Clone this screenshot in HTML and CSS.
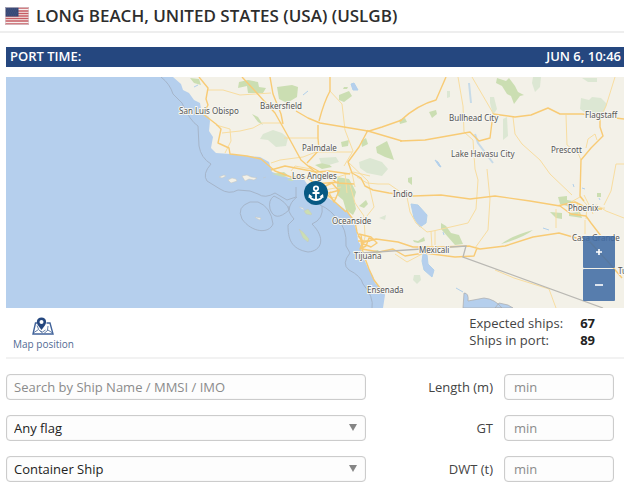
FILE: index.html
```html
<!DOCTYPE html>
<html lang="en">
<head>
<meta charset="utf-8">
<meta name="viewport" content="width=device-width, initial-scale=1">
<title>Long Beach port</title>
<link rel="stylesheet" href="styles.css">
</head>
<body>
<header class="page-head">
  <svg class="flag" viewBox="0 0 24 18" aria-hidden="true">
    <rect width="24" height="18" fill="#f6efee"/>
    <path d="M0 1h24M0 4h24M0 6.500h24M0 9h24M0 11.500h24M0 14h24M0 17h24" stroke="#c65b62" stroke-width="1.300"/>
    <rect width="13.500" height="9.500" fill="#354675"/>
    <path d="M1.500 2h11M2.500 4h10M1.500 6h11M2.500 8h10" stroke="#7582a5" stroke-width=".6" stroke-dasharray=".7 1.300"/>
    <rect x=".5" y=".5" width="23" height="17" fill="none" stroke="#d5cdd1" stroke-opacity=".65"/>
  </svg>
  <h1 class="title">LONG BEACH, UNITED STATES (USA) (USLGB)</h1>
</header>
<main class="content">
  <section class="time-bar"><span>PORT TIME:</span><time>JUN 6, 10:46</time></section>

  <section class="map" aria-label="Port map">
    <svg class="map-art" viewBox="6 77 618 231" preserveAspectRatio="xMidYMid slice">
      <rect x="6" y="77" width="618" height="231" fill="#b5cfed"/>
      <path fill="#f3f1e8" d="M173 77L181 84L183 90L189 93L194 100L200 103L201 109L204 114L209 117L210 121L209 131L213 137L211 148L216 153L230 154L245 156L260 157L269 162L272 172L281 175L289 178L303 178L307 184L314 192L328 198L336 203L343 208L350 215L354 223L357 232L358 241L362 247L363 257L368 268L373 276L375 283L383 290L385 295L383 308H624V77Z"/>
      <g class="woods">
        <path d="M190 78l9 1 2 6-7-2ZM239 82l9-2 10 2 1 5 7 1-3 5-15 0-1-7-9 2ZM277 87l15-2 6 2-1 10-10 6-8-4ZM339 95l10-4 3 5-8 6-5-2ZM252 114l6 3 5 8-5-3ZM359 206l7-6 2 4-4 4ZM376 147l11-6 4 10 3 9-9-3-8-4ZM361 141l5-3 2 6-6 3ZM341 142l8-2-1 6-6 1ZM497 78l9 3 3-3 6 8 3 6 6 3-4 1-6 8-3-8-4-2-5-8-6-3ZM272 174l12-2 5 4-6 1ZM315 165l11-3 6 5-10 2ZM337 177l12 2 4 7 3 6-2 7 2 10-3 6-7-5-3-10-6-5ZM399 120l6-2 2 4-7 2ZM429 112l7-2 1 4-5 4ZM441 223l5 3 5 7 8 2 4 9-8 1-7-8-7-8ZM413 240l5 1 6-4 1 4-7 2-4-1ZM408 178l4-1 0 8-4-3ZM558 197l9-1 0 4 6 1-2 6-11-3ZM569 213l11-1 2 6-6-1-7-1ZM501 244q10-8 32-14-10 8-32 14ZM597 193h4v4h-4ZM550 212l12 1v6l-6-1ZM344 87h4l-1 2h-4ZM287 180l6-3 5 1-6 3ZM373 251l5-1 3 4-7 1Z" fill="#cbdeb2"/>
        <path d="M263 134l10-4 9 3 6 5-2 8-10 1-8-7-8-1ZM359 162l11-4 12 4 6 7-6 7-15-3-7-5ZM319 158l17-1 3 5-10 3-8-2ZM533 77l8 0-1 10-5 5-3-9ZM582 78h15v4h-9ZM581 98l8 2 3-3 9 1 6 6-3 8 4 3-8 3-5-5-7 2-8-6Z M503 119l4-2 1 19-5 4ZM490 97l4 0 3 12-4 6-3-12ZM414 275l6 0 1 5-4 4-4-4ZM379 218l7-3-1 5ZM447 91l3 0 0 6-3 1Z" fill="#dce7d3"/>
      </g>
      <g fill="#b5cfed" stroke="#b1d0eb">
        <path d="M351 84l3-1 4 7-5 0ZM411 204l7 1 9 10-1 8-6 4-6-9ZM423 254l4 1 1 9 6 6-2 7-8-7-2-9Z"/>
        <path d="M435 160l3 2 3 5-2-1ZM303 95l5-4M443 232l1 3M456 288l7 4M194 87l4-2M543 228l6 2M582 188l3 1M573 184l1 3M599 198l1 2"/>
      </g>
      <path d="M469 83l2 20M475 134l3 9 15 20" fill="none" stroke="#c7dbe8" stroke-width="2"/>
      <path d="M463 308l1-15q5 0 4 8l16-3q11 1 18 10ZM495 308l4-5 9 2 5 3Z" fill="#b5cfed" stroke="#aaa" stroke-width=".7"/>
      <g fill="#f3f1e8" stroke="#c4c7c3" stroke-width=".5">
        <path d="M219 177l5-2 2 1-4 2ZM228 180l4-2 4 1 1 2-6 2ZM242 176l5-1 4 2 6 1-3 2-5-1-4 2ZM255 217l6 1-1 2-4-2ZM263 178l3-1M299 207l4 1 1 2"/>
        <path d="M304 211l4-2 4 5-1 1-5-1ZM299 229l4 3 6 7-1 3-5-4Z" fill="#cbdeb2"/>
      </g>
      <g class="boundary">
        <path d="M161 77Q170 84 173 94L182 103Q190 121 198 126L199 146Q201 158 211 164Q202 174 207 181L220 189Q229 195 238 190L250 191L258 194Q265 199 275 193L287 200L296 197V187"/>
        <path d="M250 202Q236 207 242 219C252 233 269 234 273 224Q271 207 258 202ZM274 196Q287 202 289 210Q275 223 270 209Q268 200 274 196ZM289 210Q290 202 297 197M322 206Q324 219 312 224C326 238 322 251 308 252C291 249 288 239 288 225L294 219Q287 211 289 206M320 205Q332 210 338 221Q347 228 346 246L350 253Q341 264 349 270Q361 276 363 284Q374 297 372 308"/>
      </g>
      <g class="roads">
        <path d="M208 90L223 90L240 95L271 93M222 133L240 131L253 128L262 123L282 123M216 125L230 129L231 141L225 153M284 138H318M329 90L342 104L345 130L353 151L344 166M315 152L352 152M458 77L463 106L464 132L473 140L475 169L478 180L476 209L468 223L433 231L427 232L416 223L410 212L407 197M472 77L493 113M513 117L515 134L522 144L540 160L550 174L572 195M566 115L567 145L578 153L581 160M487 169L490 199L488 230L475 248M615 77L606 106L603 112M431 231L432 248M435 231V245M422 254L407 262L395 254"/>
        <path d="M350 185L355 203L364 216L365 237L360 255M357 177L367 183L378 184L389 184L399 191M348 162L368 181L374 207L363 221M324 190L341 187M345 173L347 193M352 173L355 187M309 170L312 184L322 194L331 192L321 196L337 198M315 173L328 175L338 177L353 172L370 176M291 171L295 166L311 169M271 163L280 160L303 157L316 152M567 206L572 211L597 205L606 211L624 218M571 202L580 197L587 205L586 219M577 202L579 215M584 195L590 207L593 214M575 209L605 208M556 209V228M585 220V234M586 148L588 139L595 134L597 140M624 164H616L611 191L604 205M495 270L514 278L549 289L556 308"/>
        <path class="major" d="M199 77L208 88L206 99L208 105L203 114L216 124L221 129L218 143L229 148L230 154L247 156L261 159L275 171L291 177L305 177L315 183L324 191L335 202L346 212M242 77L255 91L275 113L284 129L289 138L301 160L314 171L324 179M270 77L273 94L281 114L283 124M296 111L308 118L320 123L368 131L402 141M318 125V138L319 150L307 163M400 121Q417 105 436 100L446 77M319 121Q324 102 330 91L330 77"/>
        <path class="major" d="M400 141L425 140L470 132L479 141L490 138L493 114L515 117L531 115L548 108L560 114H582L624 119M402 120L382 127L366 132M368 130L359 147L348 162L352 173L361 178L365 186L373 190L389 193L413 196L441 195L470 199L495 196L530 201L560 206M600 118L600 127L603 136L591 148L581 160L580 196L584 201M557 206L575 202L583 206L594 209L602 209"/>
        <path class="major" d="M346 210L355 222L357 232L361 240L363 253L369 269L374 280L383 292M359 234L371 237L377 243L371 247L361 243L376 239L398 242L413 247H440L469 246L480 249L505 246L533 237L559 233L590 242L610 264L622 278M362 249L379 252L393 249L405 256L424 253L455 257L474 256L477 248M560 206L571 214L586 216L591 223L601 236"/>
        <path class="major" d="M309 166L331 178L337 183L354 184M271 170L285 166L316 172L329 171L350 174M315 184L339 182M321 188L332 183L339 191L334 202L329 193L340 190M358 236l5 5-3 8 6-3 3-8 5 2M358 241h12M361 235l2 14"/>
      </g>
      <g class="state-line"><path d="M362 253L466 246L463 257L603 308"/></g>
      <g class="places">
        <text x="179" y="114">San Luis Obispo</text><text x="260" y="109">Bakersfield</text><text x="302" y="151">Palmdale</text><text x="292" y="179">Los Angeles</text><text x="449" y="121">Bullhead City</text><text x="585" y="118">Flagstaff</text><text x="451" y="157">Lake Havasu City</text><text x="551" y="153">Prescott</text><text x="393" y="197">Indio</text><text x="332" y="224">Oceanside</text><text x="354" y="259">Tijuana</text><text x="419" y="253">Mexicali</text><text x="367" y="293">Ensenada</text><text x="568" y="211">Phoenix</text><text x="572" y="241">Casa Grande</text><text x="618" y="274">Tucson</text>
      </g>
      <g transform="translate(316 193)">
        <circle r="12" fill="#075983"/>
        <g fill="none" stroke="#fff" stroke-width="1.800" stroke-linejoin="round"><circle cy="-4.500" r="2.200"/><path d="M0-2.500V7M-3.500 0H3.500M-6.500 2.500Q-5.500 6.800 0 7Q5.500 6.800 6.500 2.500"/></g>
        <path d="M-7.500 5L-7 1L-3.500 3.500ZM7.500 5L7 1L3.500 3.500Z" fill="#fff"/>
      </g>
    </svg>
    <div class="zoom-controls">
      <button class="zoom-button" type="button" aria-label="Zoom in"><svg viewBox="0 0 8 8"><path d="M1 4h6M4 1v6"/></svg></button>
      <button class="zoom-button" type="button" aria-label="Zoom out"><svg viewBox="0 0 8 8"><path d="M0 4h8"/></svg></button>
    </div>
  </section>

  <section class="summary">
    <a class="map-link" href="#map">
      <svg class="map-link-icon" viewBox="0 0 22 18" aria-hidden="true">
        <path d="M5 6H3.500L1 17H21L18 6H14.500" fill="none" stroke="#41639a" stroke-width="1.400"/>
        <path d="M2 15.500l4.500-3 4 3.500M12 16.500l4-3.500 4.500 3M5 8.500l1.500 3.500M16 9l-.5 4M8 14l2.500 1 3-2" fill="none" stroke="#6580aa"/>
        <path d="M9.500 .5C4 .5 4 6 6.500 9L9.500 13L12.500 9C15 6 15 .5 9.500 .5Z" fill="#25477f"/><circle cx="9.500" cy="5" r="2" fill="#fff"/>
      </svg>
      <span>Map position</span>
    </a>
    <dl class="stats"><dt>Expected ships:</dt><dd>67</dd><dt>Ships in port:</dt><dd>89</dd></dl>
  </section>

  <form class="filters">
    <input class="field" type="text" aria-label="Search ships" placeholder="Search by Ship Name / MMSI / IMO">
    <label class="field-label" for="length">Length (m)</label>
    <input class="field" id="length" type="text" placeholder="min">
    <div class="select-wrap"><select class="field" aria-label="Flag"><option>Any flag</option></select></div>
    <label class="field-label" for="gt">GT</label>
    <input class="field" id="gt" type="text" placeholder="min">
    <div class="select-wrap"><select class="field" aria-label="Ship type"><option>Container Ship</option></select></div>
    <label class="field-label" for="dwt">DWT (t)</label>
    <input class="field" id="dwt" type="text" placeholder="min">
  </form>
</main>
</body>
</html>
```
FILE: styles.css
```css
* { box-sizing: border-box; }
body {
  margin: 0;
  background: #fff;
  color: #444;
  font: 13px/18px "Open Sans", "Noto Sans", sans-serif;
}
.page-head {
  display: flex;
  align-items: center;
  gap: 7px;
  height: 33px;
  padding-left: 5px;
  border-bottom: 2px solid #eee;
}
.flag { width: 24px; height: 18px; }
.title {
  margin: 0;
  color: #2d2d2d;
  font-size: 17px;
  font-weight: 600;
  line-height: 24px;
  white-space: nowrap;
}
.content { padding: 14px 0 6px 6px; }
.time-bar {
  display: flex;
  justify-content: space-between;
  height: 20px;
  padding: 0 3px 0 4px;
  background: #25477f;
  color: #fff;
  font-weight: 600;
  line-height: 19px;
}
.map { position: relative; height: 231px; margin-top: 10px; overflow: hidden; }
.map-art { display: block; width: 100%; height: 100%; }
.boundary { fill: none; stroke: #a5b5ca; stroke-width: 1; }
.roads { fill: none; stroke: #f8dda0; stroke-width: 1; stroke-linejoin: round; }
.major { stroke: #f8cb75; stroke-width: 1.4; }
.state-line { fill: none; stroke: #b9b8b3; stroke-width: 1.3; }
.places {
  fill: #555;
  stroke: #f7f6f1;
  stroke-width: 2px;
  stroke-linejoin: round;
  paint-order: stroke;
  font: 8px "Noto Sans", sans-serif;
}
.zoom-controls {
  position: absolute;
  right: 9px;
  bottom: 7px;
  display: grid;
  gap: 1px;
}
.zoom-button {
  display: grid;
  place-items: center;
  width: 32px;
  height: 32px;
  padding: 0;
  border: 0;
  border-radius: 1px;
  background: rgb(65 108 164 / 88%);
}
.zoom-button svg { width: 8px; height: 8px; fill: none; stroke: #fff; stroke-width: 1.6; }
.summary {
  display: flex;
  justify-content: space-between;
  height: 51px;
  padding: 7px 29px 0 7px;
  border-bottom: 2px solid #f2f2f2;
}
.map-link {
  display: flex;
  flex-direction: column;
  align-items: center;
  padding-top: 2px;
  color: #526b94;
  font-size: 10px;
  text-decoration: none;
}
.map-link-icon { width: 22px; height: 18px; }
.stats {
  display: grid;
  grid-template-columns: auto auto;
  column-gap: 17px;
  align-content: start;
  margin: 0;
  line-height: 17px;
}
.stats dd { margin: 0; color: #222; font-weight: 700; }
.filters {
  display: grid;
  grid-template-columns: minmax(0, 1fr) 116px 110px;
  align-items: center;
  gap: 15px 11px;
  padding: 15px 10px 0 0;
}
.field {
  display: block;
  width: 100%;
  height: 26px;
  padding: 0 7px;
  border: 1px solid #ccc;
  border-radius: 4px;
  outline: 0;
  background: #fdfdfd;
  box-shadow: inset 0 0 1px #ccc;
  color: #222;
  font: inherit;
  appearance: none;
}
.field-label + .field { padding-left: 9px; }
.field::placeholder { color: #8b8b8b; opacity: 1; }
.field-label { text-align: right; }
.select-wrap { position: relative; }
.select-wrap::after {
  content: "";
  position: absolute;
  top: 9px;
  right: 9px;
  width: 8px;
  height: 7px;
  background: #858585;
  clip-path: polygon(0 0, 100% 0, 50% 100%);
  pointer-events: none;
}
```
